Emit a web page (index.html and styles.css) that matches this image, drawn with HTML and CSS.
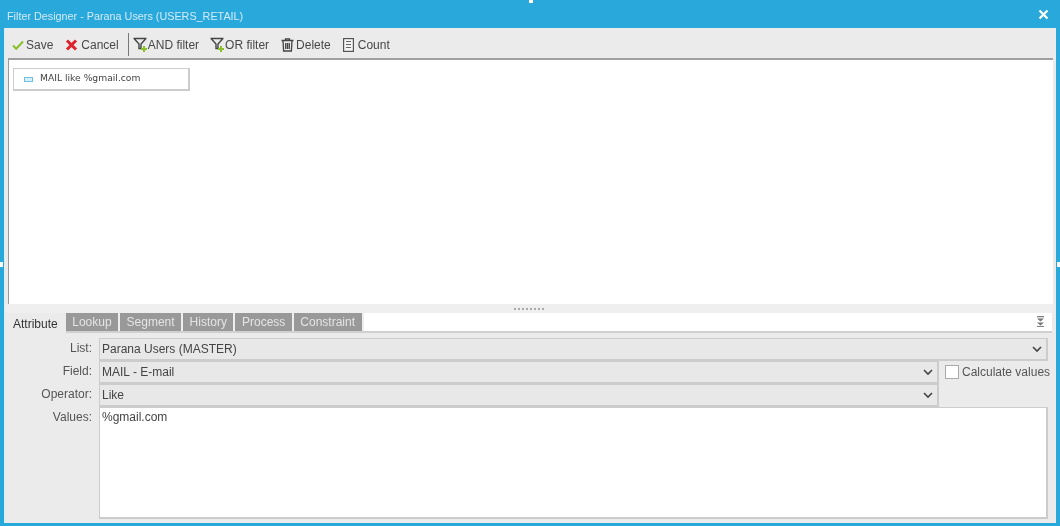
FILE: index.html
```html
<!DOCTYPE html>
<html lang="en">
<head>
	<meta charset="utf-8">
	<title>Filter Designer</title>
	<link rel="stylesheet" href="styles.css">
</head>
<body>
	<div class="window">
		<i class="grip grip_top"></i><i class="grip grip_left"></i><i class="grip grip_right"></i>
		<div class="titlebar">
			<span>Filter Designer - Parana Users (USERS_RETAIL)</span>
			<svg class="close" width="11" height="11" viewBox="0 0 11 11"><path d="M1.500 1.500l8 8M9.500 1.500l-8 8" stroke="#fff" stroke-width="2.200" fill="none"/></svg>
		</div>
		<div class="body">
			<div class="toolbar">
				<a class="btn btn_save"><svg width="12" height="12" viewBox="0 0 12 12"><path d="M1 6.500l3.200 3.200L11 2.500" stroke="#8bc02a" stroke-width="2" fill="none"/></svg>Save</a>
				<a class="btn btn_cancel"><svg width="13" height="12" viewBox="0 0 13 12"><path d="M2 1.500l9 9M11 1.500l-9 9" stroke="#e0202a" stroke-width="3" fill="none"/></svg>Cancel</a>
				<i class="sep"></i>
				<a class="btn btn_and"><svg width="15" height="15" viewBox="0 0 15 15"><path d="M.5 1.500h13M1.500 2l4.500 5v4.500h2V7l4.500-5" stroke="#444" stroke-width="1.400" fill="none"/><path d="M8 12h6M11 9v6" stroke="#8bc02a" stroke-width="2" fill="none"/></svg>AND filter</a>
				<a class="btn btn_or"><svg width="15" height="15" viewBox="0 0 15 15"><path d="M.5 1.500h13M1.500 2l4.500 5v4.500h2V7l4.500-5" stroke="#444" stroke-width="1.400" fill="none"/><path d="M8 12h6M11 9v6" stroke="#8bc02a" stroke-width="2" fill="none"/></svg>OR filter</a>
				<a class="btn btn_delete"><svg width="13" height="14" viewBox="0 0 13 14"><path d="M.5 2.500h12M4.500 2.500V.8h4v1.700M2 2.500l.6 10.500h7.800l.6-10.500M4.700 5v6M6.500 5v6M8.300 5v6" stroke="#444" stroke-width="1.300" fill="none"/></svg>Delete</a>
				<a class="btn btn_count"><svg width="11" height="14" viewBox="0 0 11 14"><rect x=".6" y=".6" width="9.800" height="12.800" stroke="#555" stroke-width="1.200" fill="#f4f4f4"/><path d="M3 3.500h5M3 6.500h5M3 9.500h5" stroke="#666" stroke-width="1.200"/></svg>Count</a>
			</div>
			<div class="canvas">
				<div class="node"><i class="node_icon"></i><span>MAIL like %gmail.com</span></div>
			</div>
			<div class="splitter"><i></i><i></i><i></i><i></i><i></i><i></i><i></i><i></i></div>
			<div class="tabs">
				<span class="tab current">Attribute</span>
				<span class="tab">Lookup</span>
				<span class="tab">Segment</span>
				<span class="tab">History</span>
				<span class="tab">Process</span>
				<span class="tab">Constraint</span>
				<svg class="collapse" width="9" height="11" viewBox="0 0 9 11"><path d="M1 .7h7" stroke="#777" stroke-width="1.200"/><path d="M1 2.500h7L4.500 5.500zM1 6.500h7L4.500 9.500z" fill="#777"/><path d="M1 10.400h7" stroke="#777"/></svg>
			</div>
			<div class="form">
				<label class="lbl">List:</label>
				<div class="select span2">Parana Users (MASTER)<svg width="10" height="7" viewBox="0 0 10 7"><path d="M1 1l4 4 4-4" stroke="#444" stroke-width="1.600" fill="none"/></svg></div>
				<label class="lbl">Field:</label>
				<div class="select">MAIL - E-mail<svg width="10" height="7" viewBox="0 0 10 7"><path d="M1 1l4 4 4-4" stroke="#444" stroke-width="1.600" fill="none"/></svg></div>
				<div class="calc"><i class="check"></i>Calculate values</div>
				<label class="lbl">Operator:</label>
				<div class="select">Like<svg width="10" height="7" viewBox="0 0 10 7"><path d="M1 1l4 4 4-4" stroke="#444" stroke-width="1.600" fill="none"/></svg></div>
				<div></div>
				<label class="lbl">Values:</label>
				<div class="values span2">%gmail.com</div>
			</div>
		</div>
	</div>
</body>
</html>
```

FILE: styles.css
```css
*{margin:0;padding:0;box-sizing:border-box;}
html,body{height:100%;overflow:hidden;}
body{background:#29a8dc;font-family:"Liberation Sans",Arial,sans-serif;font-size:12px;color:#444;}
.window{position:relative;width:1060px;height:526px;padding:0 4px 3px;display:flex;flex-direction:column;background:#29a8dc;filter:blur(.3px);}

.grip{position:absolute;background:#fff;width:3px;height:5px;}
.grip_top{left:529px;top:-2px;width:4px;}
.grip_left{left:0;top:262px;}
.grip_right{right:0;top:262px;}

.titlebar{height:28px;flex:none;display:flex;align-items:center;justify-content:space-between;padding:3px 7px 0 3px;color:#d2ebf6;font-size:10.800px;}
.close{margin-top:-3px;}

.body{flex:1;min-height:0;display:flex;flex-direction:column;background:#ebebeb;border-left:1px solid #d5edf7;}

.toolbar{height:30px;flex:none;display:flex;align-items:center;padding:3px 0 0 7px;color:#484848;}
.btn{display:flex;align-items:center;gap:2px;white-space:nowrap;}
.btn_save{margin-right:12px;}
.btn_cancel{margin-right:9px;gap:3px;}
.btn_and{gap:0;margin-right:11px;}
.btn_or{gap:0;margin-right:12px;}
.btn_delete{margin-right:12px;gap:2px;}
.btn_count{gap:4px;}
.sep{width:1px;height:23px;background:#777;margin-right:4px;}

.canvas{height:246px;flex:none;margin:0 3px 0 3px;background:#fff;border-top:2px solid #a0a0a0;border-left:1px solid #999;padding:8px 4px;}
.node{width:177px;height:23px;border:1px solid #ccc;border-width:1px 2px 2px 1px;display:flex;align-items:flex-start;padding:3px 0 0 10px;font-family:"DejaVu Sans",sans-serif;font-size:9.200px;color:#444;}
.node_icon{width:9px;height:5px;border:1px solid #6cc0e0;background:#d7effa;margin:5px 7px 0 0;}

.splitter{height:9px;flex:none;display:flex;justify-content:center;align-items:center;gap:2px;background:#efefef;margin-right:3px;}
.splitter i{width:2px;height:2px;background:#aaa;}

.tabs{height:20px;flex:none;display:flex;align-items:stretch;background:#fff;border-bottom:2px solid #d0d0d0;position:relative;margin-right:4px;margin-left:2px;}
.tab{padding:0 6.500px;line-height:18px;background:#999;color:#e4e4e4;border-right:2px solid #eee;}
.tab.current{background:#ebebeb;color:#333;padding:2px 8px 0 6px;margin-bottom:-2px;border-right:0;}
.collapse{position:absolute;right:7px;top:3px;}

.form{flex:1;min-height:0;display:grid;grid-template-columns:94px 840px minmax(0,1fr);grid-template-rows:23px 23px 23px 1fr;padding:5px 8px 4px 0;}
.lbl{text-align:right;padding-right:7px;line-height:21px;color:#555;}
.select{height:23px;border:1px solid #ccc;border-width:1px 2px 2px 1px;background:#e8e8e8;display:flex;align-items:center;justify-content:space-between;padding:0 4px 0 2px;color:#444;}
.span2{grid-column:2 / 4;}
.calc{display:flex;align-items:center;gap:3px;padding-left:6px;height:21px;color:#555;white-space:nowrap;}
.check{width:14px;height:14px;background:#fff;border:1px solid #aaa;flex:none;}
.values{background:#fff;border:1px solid #ccc;border-width:1px 2px 2px 1px;padding:2px;color:#444;}
```
